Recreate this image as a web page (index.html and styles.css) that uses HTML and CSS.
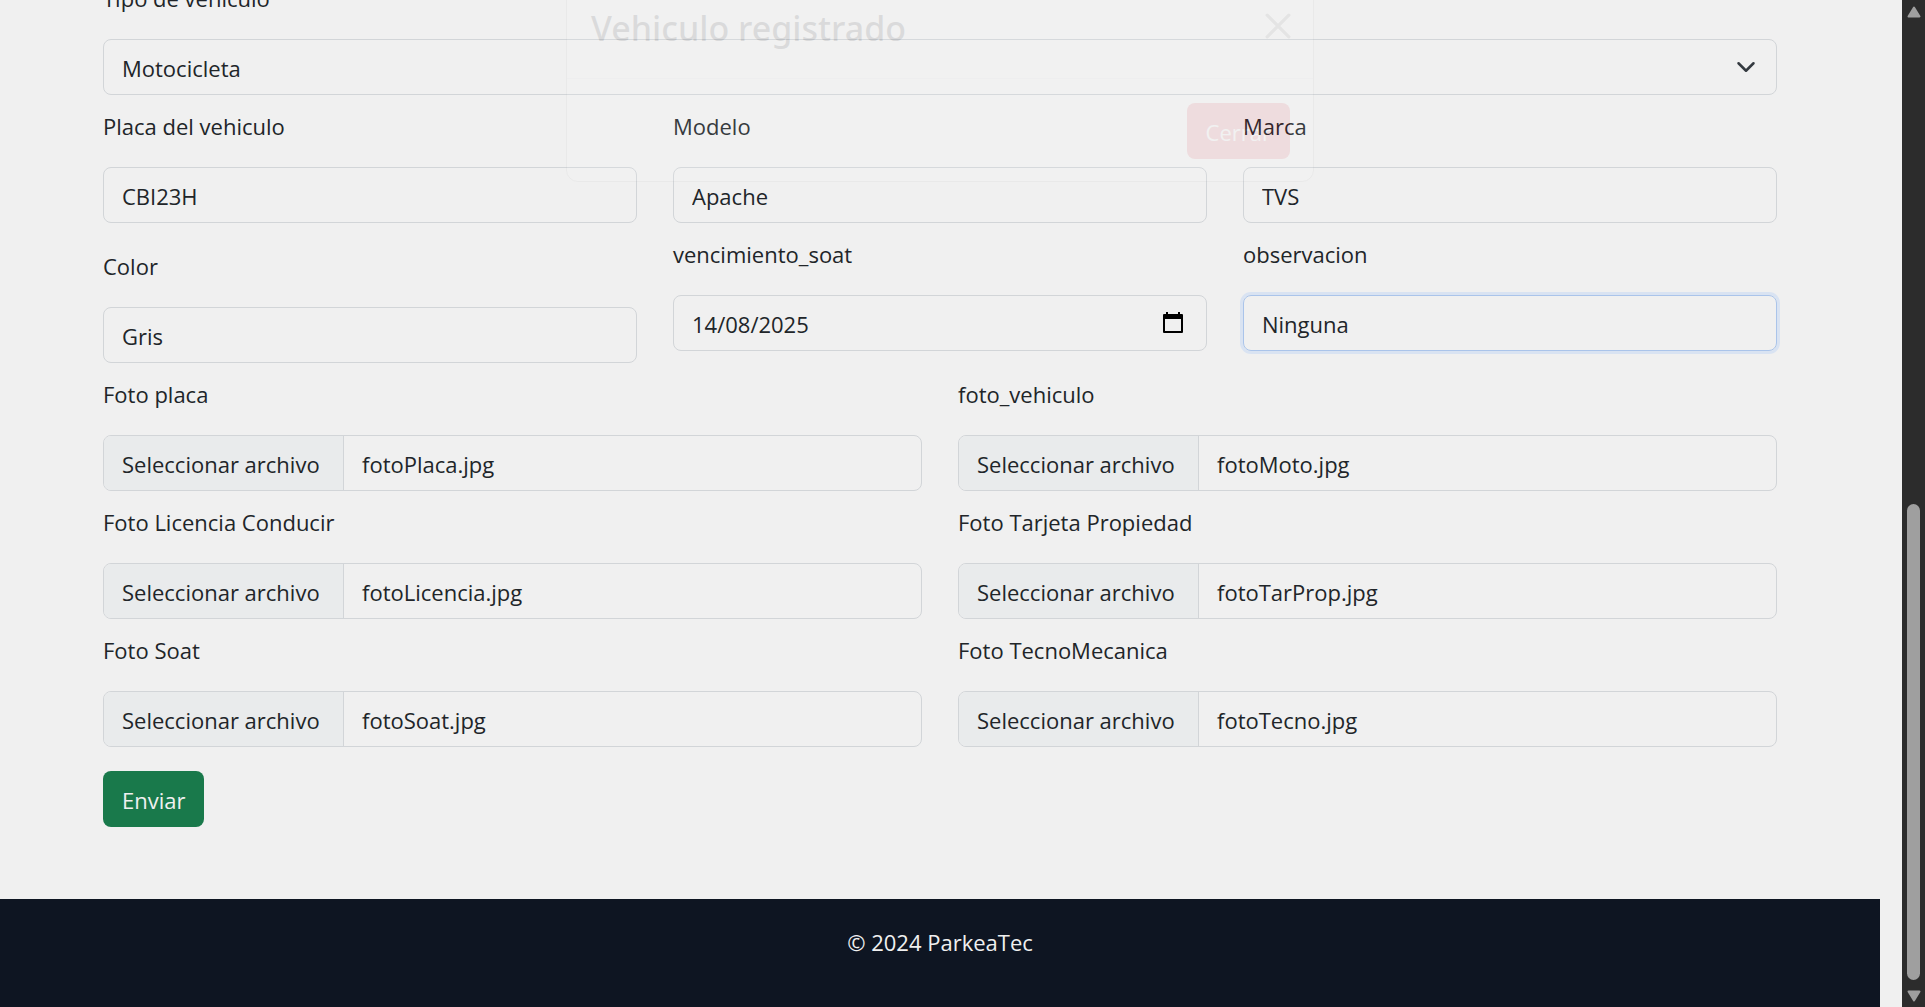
FILE: index.html
```html
<!DOCTYPE html>
<html lang="es">
<head>
<meta charset="utf-8">
<meta name="viewport" content="width=device-width, initial-scale=1">
<title>ParkeaTec</title>
<link rel="stylesheet" href="styles.css">
</head>
<body>
<div class="page">
  <main class="content">
    <form class="form">
      <div class="field">
        <label class="label" for="tipo">Tipo de vehiculo</label>
        <div class="control-wrap">
          <select class="control" id="tipo"><option>Motocicleta</option></select>
          <svg class="chevron" viewBox="0 0 16 16" aria-hidden="true"><path d="m2 5 6 6 6-6" fill="none" stroke="#343a40" stroke-width="2" stroke-linecap="round" stroke-linejoin="round"/></svg>
        </div>
      </div>
      <div class="row row-3">
        <div class="field"><label class="label" for="placa">Placa del vehiculo</label><input class="control" id="placa" type="text" value="CBI23H"></div>
        <div class="field"><label class="label" for="modelo">Modelo</label><input class="control" id="modelo" type="text" value="Apache"></div>
        <div class="field"><label class="label" for="marca">Marca</label><input class="control" id="marca" type="text" value="TVS"></div>
      </div>
      <div class="row row-3">
        <div class="field field-spaced"><label class="label" for="color">Color</label><input class="control" id="color" type="text" value="Gris"></div>
        <div class="field">
          <label class="label" for="soat">vencimiento_soat</label>
          <div class="control-wrap">
            <input class="control" id="soat" type="text" value="14/08/2025">
            <button class="date-button" type="button" aria-label="Abrir calendario"><svg viewBox="0 0 20 22" aria-hidden="true"><path d="M3 0h2v2h10V0h2v2h2q1 0 1 1v17q0 1-1 1H1q-1 0-1-1V3q0-1 1-1h2zM2 7v12h16V7z" fill="#000" fill-rule="evenodd"/></svg></button>
          </div>
        </div>
        <div class="field"><label class="label" for="observacion">observacion</label><input class="control control-active" id="observacion" type="text" value="Ninguna"></div>
      </div>
      <div class="row row-2">
        <div class="field"><label class="label" for="f-placa">Foto placa</label><div class="control file"><span class="file-button">Seleccionar archivo</span><span class="file-name">fotoPlaca.jpg</span><input class="file-input" id="f-placa" type="file"></div></div>
        <div class="field"><label class="label" for="f-moto">foto_vehiculo</label><div class="control file"><span class="file-button">Seleccionar archivo</span><span class="file-name">fotoMoto.jpg</span><input class="file-input" id="f-moto" type="file"></div></div>
        <div class="field"><label class="label" for="f-licencia">Foto Licencia Conducir</label><div class="control file"><span class="file-button">Seleccionar archivo</span><span class="file-name">fotoLicencia.jpg</span><input class="file-input" id="f-licencia" type="file"></div></div>
        <div class="field"><label class="label" for="f-tarjeta">Foto Tarjeta Propiedad</label><div class="control file"><span class="file-button">Seleccionar archivo</span><span class="file-name">fotoTarProp.jpg</span><input class="file-input" id="f-tarjeta" type="file"></div></div>
        <div class="field"><label class="label" for="f-soat">Foto Soat</label><div class="control file"><span class="file-button">Seleccionar archivo</span><span class="file-name">fotoSoat.jpg</span><input class="file-input" id="f-soat" type="file"></div></div>
        <div class="field"><label class="label" for="f-tecno">Foto TecnoMecanica</label><div class="control file"><span class="file-button">Seleccionar archivo</span><span class="file-name">fotoTecno.jpg</span><input class="file-input" id="f-tecno" type="file"></div></div>
      </div>
      <button class="button button-success" type="submit">Enviar</button>
    </form>
  </main>
  <footer class="footer">© 2024 ParkeaTec</footer>
</div>

<div class="modal-layer">
  <section class="modal" role="dialog" aria-labelledby="modal-title">
    <header class="modal-header">
      <h2 class="modal-title" id="modal-title">Vehiculo registrado</h2>
      <button class="modal-close" type="button" aria-label="Close"><svg viewBox="0 0 24 24" aria-hidden="true"><path d="m2 2 20 20M22 2 2 22" stroke="#000" stroke-width="3" stroke-linecap="round"/></svg></button>
    </header>
    <div class="modal-footer"><button class="button button-danger" type="button">Cerrar</button></div>
  </section>
</div>

<div class="scrollbar" aria-hidden="true">
  <svg class="scroll-arrow" viewBox="0 0 14 12"><path d="M7 1.500 12.500 10.500H1.500z" fill="#9f9f9f" stroke="#9f9f9f" stroke-width="2" stroke-linejoin="round"/></svg>
  <div class="scroll-track"><div class="scroll-thumb"></div></div>
  <svg class="scroll-arrow" viewBox="0 0 14 12"><path d="M7 10.500 12.500 1.500H1.500z" fill="#9f9f9f" stroke="#9f9f9f" stroke-width="2" stroke-linejoin="round"/></svg>
</div>
</body>
</html>
```
FILE: styles.css
```css
* { box-sizing: border-box; }

body {
  margin: 0;
  background: #f0f0f0;
  color: #212529;
  font: 22px/36px "Open Sans", "Noto Sans", sans-serif;
}

/* Room on the right for the gutter and the scrollbar */
.page {
  display: flex;
  flex-direction: column;
  min-height: 100vh;
  padding-right: 45px;
}

.content { padding: 0 103px 72px; }

/* The form is scrolled: its first label is cut by the window's top */
.form { margin-top: -20px; }

.row {
  display: grid;
  column-gap: 36px;
  align-items: start;
}
.row-3 { grid-template-columns: repeat(3, 1fr); }
.row-2 { grid-template-columns: repeat(2, 1fr); }
.row .field { padding-top: 13px; }
.row .field-spaced { padding-top: 25px; }

.label {
  display: block;
  margin-bottom: 23px;
}

.control {
  display: block;
  width: 100%;
  height: 56px;
  padding: 2px 18px 0;
  border: 1px solid #d2d5d8;
  border-radius: 8px;
  background: transparent;
  color: inherit;
  font: inherit;
  appearance: none;
  outline: 0;
}
.control-active {
  border-color: #aac4ea;
  box-shadow: 0 0 0 3px #d9e3f2;
}

.control-wrap { position: relative; }
.chevron {
  position: absolute;
  top: 18px;
  right: 21px;
  width: 20px;
  height: 20px;
  pointer-events: none;
}
.date-button {
  position: absolute;
  top: 17px;
  right: 24px;
  width: 20px;
  height: 22px;
  padding: 0;
  border: 0;
  background: none;
}
.date-button svg,
.modal-close svg { display: block; width: 100%; }

.file {
  position: relative;
  display: flex;
  padding: 0;
  overflow: hidden;
  line-height: 56px;
}
.file-button {
  width: 240px;
  padding-left: 18px;
  border-right: 1px solid #d2d5d8;
  background: #e9ebec;
}
.file-name { padding-left: 18px; }
.file-input {
  position: absolute;
  inset: 0;
  width: 100%;
  opacity: 0;
}

.button {
  display: block;
  height: 56px;
  padding: 2px 19px 0;
  border: 0;
  border-radius: 8px;
  color: #f0f0f0;
  font: inherit;
}
.button-success { margin-top: 24px; background: #19794b; }
.button-danger { background: #dc3545; color: #fff; }

.footer {
  flex: 1;
  padding: 25px 24px;
  background: #0e1522;
  color: #f0f0f0;
  text-align: center;
}

/* Dialog caught while it fades out over the form */
.modal-layer {
  position: fixed;
  top: -24px;
  left: 0;
  right: 45px;
  display: flex;
  justify-content: center;
  opacity: .1;
  pointer-events: none;
}
.modal {
  width: 748px;
  border: 1px solid #b0b0b0;
  border-radius: 12px;
  background: #fff;
}
.modal-header {
  display: flex;
  align-items: center;
  justify-content: space-between;
  height: 102px;
  padding: 0 22px 0 24px;
  border-bottom: 1px solid #dee2e6;
}
.modal-title {
  margin: 0;
  font: 500 34px/50px "Noto Sans", "Open Sans", sans-serif;
}
.modal-close {
  width: 26px;
  height: 26px;
  margin-bottom: 4px;
  padding: 0;
  border: 0;
  background: none;
  opacity: .5;
}
.modal-footer {
  display: flex;
  justify-content: flex-end;
  padding: 24px 23px 22px;
}

.scrollbar {
  position: fixed;
  inset: 0 0 0 auto;
  display: flex;
  flex-direction: column;
  align-items: center;
  gap: 10px;
  width: 23px;
  padding: 6px 0 5px;
  background: #2c2c2c;
}
.scroll-arrow { width: 14px; height: 12px; }
.scroll-track {
  display: flex;
  flex: 1;
  align-items: flex-end;
}
.scroll-thumb {
  width: 13px;
  height: 50%;
  border-radius: 7px;
  background: #9f9f9f;
}
```
